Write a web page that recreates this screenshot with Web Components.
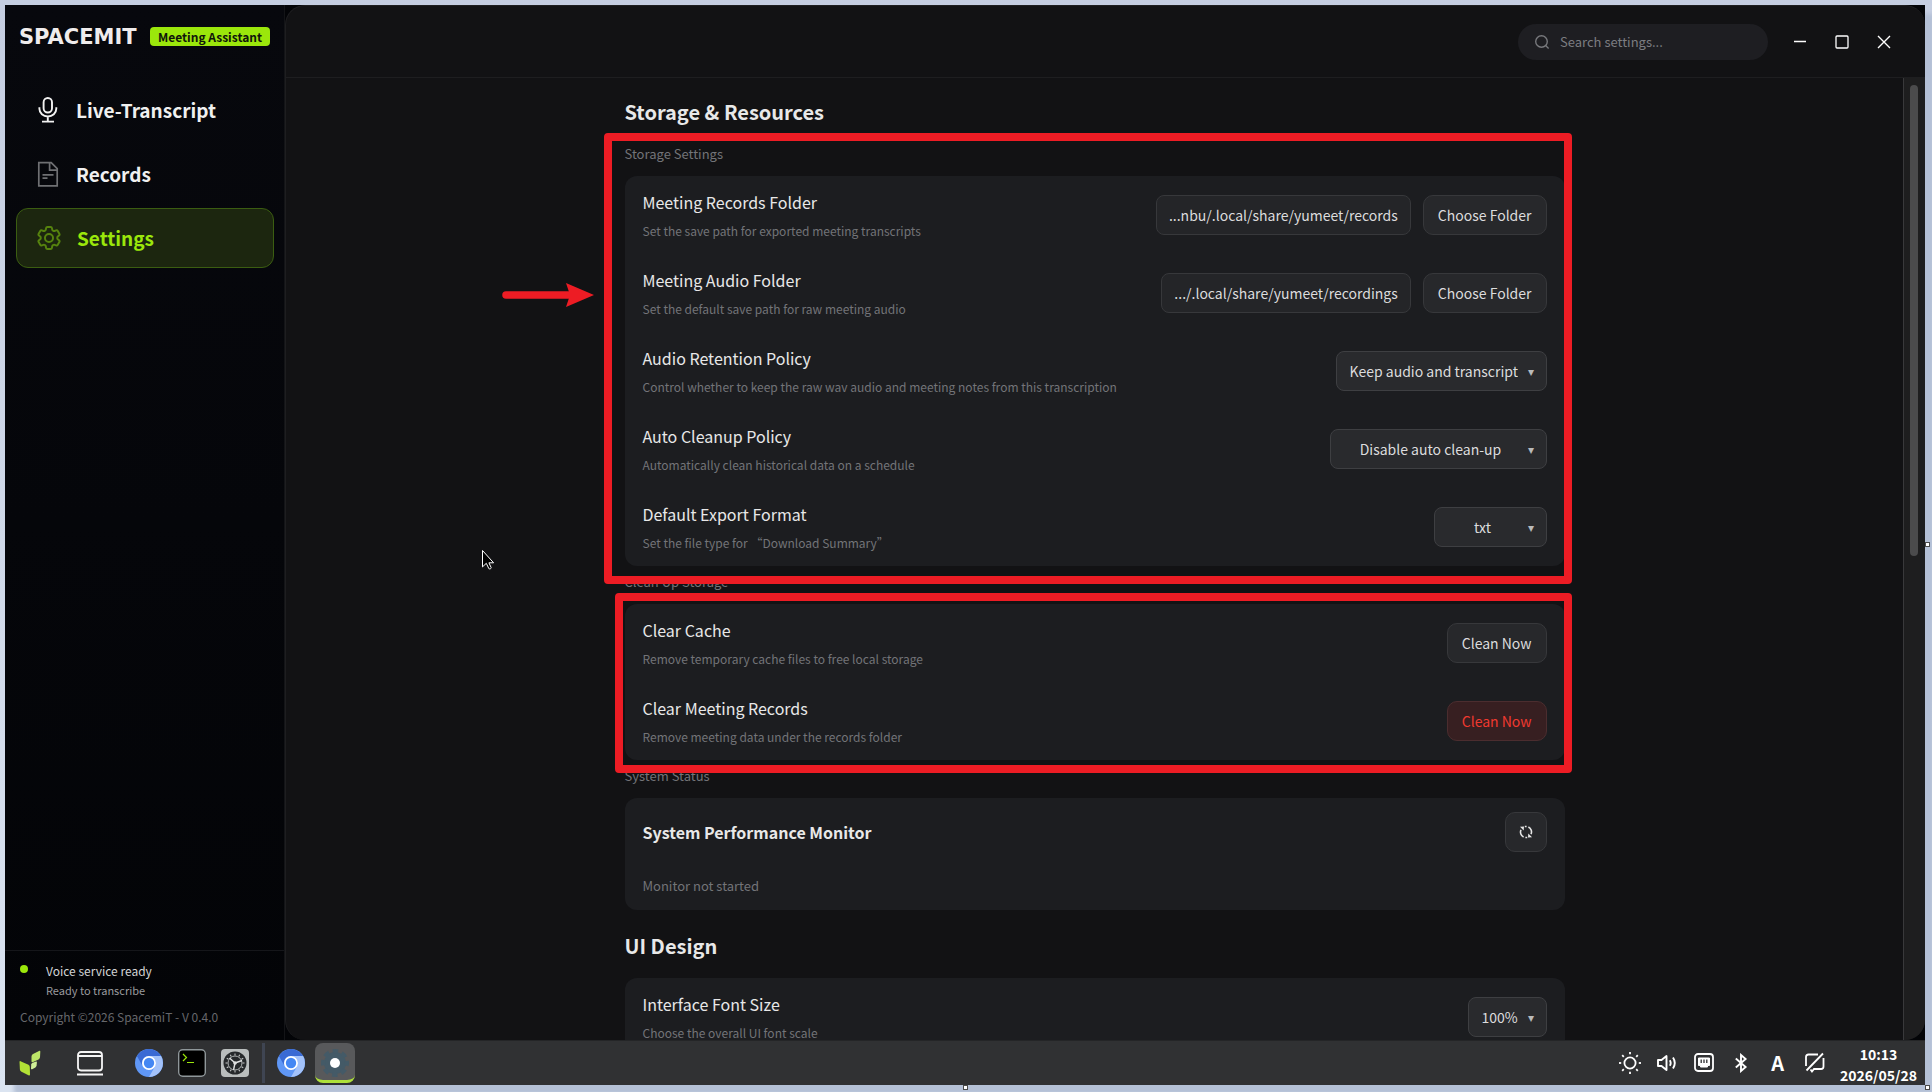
<!DOCTYPE html>
<html lang="en">
<head>
<meta charset="utf-8">
<meta name="viewport" content="width=device-width, initial-scale=1">
<title>Meeting Assistant</title>
<style>
  :root {
    --accent: #9be70b;
    --mark: #ed1c24;
    --text: #e8e8e8;
    --muted: #737478;
    --card: #1c1d20;
    --line: #1e1e20;
    --control: #27282b;
    --control-line: #37383b;
  }
  body {
    margin: 0;
    height: 100vh;
    box-sizing: border-box;
    padding: 5px 7px 7px 5px;
    overflow: hidden;
    display: flex;
    position: relative;
    background: linear-gradient(#c5cee1, #dbe4f1);
    color: var(--text);
    font-family: "Noto Sans CJK SC", "Noto Sans", sans-serif;
    font-size: 13px;
  }
</style>
</head>
<body>
<desktop-frame>
  <app-sidebar slot="sidebar">
    <nav-item icon="mic" label="Live-Transcript"></nav-item>
    <nav-item icon="doc" label="Records"></nav-item>
    <nav-item icon="gear" label="Settings" active></nav-item>
  </app-sidebar>
  <settings-page slot="main">
    <settings-section heading="Storage &amp; Resources">
      <settings-group heading="Storage Settings" mark="group">
        <setting-row kind="path" label="Meeting Records Folder" desc="Set the save path for exported meeting transcripts" value="...nbu/.local/share/yumeet/records" action="Choose Folder"></setting-row>
        <setting-row kind="path" label="Meeting Audio Folder" desc="Set the default save path for raw meeting audio" value=".../.local/share/yumeet/recordings" action="Choose Folder"></setting-row>
        <setting-row kind="select" label="Audio Retention Policy" desc="Control whether to keep the raw wav audio and meeting notes from this transcription" value="Keep audio and transcript" width="211"></setting-row>
        <setting-row kind="select" label="Auto Cleanup Policy" desc="Automatically clean historical data on a schedule" value="Disable auto clean-up" width="217"></setting-row>
        <setting-row kind="select" label="Default Export Format" desc="Set the file type for “Download Summary”" value="txt" width="113"></setting-row>
      </settings-group>
      <settings-group heading="Clean Up Storage" mark="card">
        <setting-row kind="action" label="Clear Cache" desc="Remove temporary cache files to free local storage" action="Clean Now"></setting-row>
        <setting-row kind="action" label="Clear Meeting Records" desc="Remove meeting data under the records folder" action="Clean Now" danger></setting-row>
      </settings-group>
      <settings-group heading="System Status">
        <performance-monitor label="System Performance Monitor" status="Monitor not started"></performance-monitor>
      </settings-group>
    </settings-section>
    <settings-section heading="UI Design">
      <settings-group>
        <setting-row kind="select" label="Interface Font Size" desc="Choose the overall UI font scale" value="100%" width="79"></setting-row>
      </settings-group>
    </settings-section>
  </settings-page>
  <task-bar slot="taskbar"></task-bar>
</desktop-frame>
<resize-handles></resize-handles>

<script>
const chromiumIcon = `
  <svg width="28" height="28" viewBox="0 0 28 28" aria-hidden="true">
    <circle cx="14" cy="14" r="14" fill="#5f97f6"/>
    <path d="M1.9 7A14 14 0 0 1 26.1 7H14A7 7 0 0 0 7.9 17.5Z" fill="#3a6ad4"/>
    <path d="M26.1 7A14 14 0 0 1 14 28L20 17.5A7 7 0 0 0 14 7Z" fill="#a3c2fa"/>
    <circle cx="14" cy="14" r="7" fill="#fff"/>
    <circle cx="14" cy="14" r="5.2" fill="#4487f3"/>
  </svg>`

const navIcons = {
  mic: `<svg width="24" height="28" viewBox="0 0 24 28" fill="none" stroke="#f2f2f2" stroke-width="1.9">
    <rect x="7.6" y="2" width="8.4" height="14.5" rx="4.2"/>
    <path d="M3.4 11.2v1.6a8.4 7.6 0 0 0 16.9 0v-1.6M11.8 20.4v5M6 25.6h12"/></svg>`,
  doc: `<svg width="24" height="28" viewBox="0 0 24 28" fill="none" stroke="#6f7073" stroke-width="1.7">
    <path d="M2.8 2.6h12.4l6 6v17.2H2.8zM13.6 2.6v7.6h7.6M6.5 14.8h11M6.5 18.2h5"/></svg>`,
  gear: `<svg width="24" height="28" viewBox="2.2 .7 19.6 22.7" fill="none" stroke="#56830e" stroke-width="1.6">
    <path d="M9.594 3.94c.09-.542.56-.94 1.11-.94h2.593c.55 0 1.02.398 1.11.94l.213 1.281c.063.374.313.686.645.87.074.04.147.083.22.127.325.196.72.257 1.075.124l1.217-.456a1.125 1.125 0 0 1 1.37.49l1.296 2.247a1.125 1.125 0 0 1-.26 1.431l-1.003.827c-.293.241-.438.613-.43.992a7.723 7.723 0 0 1 0 .255c-.008.378.137.75.43.991l1.004.827c.424.35.534.955.26 1.43l-1.298 2.247a1.125 1.125 0 0 1-1.369.491l-1.217-.456c-.355-.133-.75-.072-1.076.124a6.47 6.47 0 0 1-.22.128c-.331.183-.581.495-.644.869l-.213 1.281c-.09.543-.56.94-1.11.94h-2.594c-.55 0-1.019-.398-1.11-.94l-.213-1.281c-.062-.374-.312-.686-.644-.87a6.52 6.52 0 0 1-.22-.127c-.325-.196-.72-.257-1.076-.124l-1.217.456a1.125 1.125 0 0 1-1.369-.49l-1.297-2.247a1.125 1.125 0 0 1 .26-1.431l1.004-.827c.292-.24.437-.613.43-.991a6.932 6.932 0 0 1 0-.255c.007-.38-.138-.751-.43-.992l-1.004-.827a1.125 1.125 0 0 1-.26-1.43l1.297-2.247a1.125 1.125 0 0 1 1.37-.491l1.216.456c.356.133.751.072 1.076-.124.072-.044.146-.086.22-.128.332-.183.582-.495.644-.869l.214-1.28Z"/>
    <circle cx="12" cy="12" r="3.3"/></svg>`
}

// Shared look of the buttons inside cards
const buttonStyles = `
  button {
    box-sizing: border-box;
    height: 40px;
    padding: 0 14px;
    border: 1px solid var(--control-line);
    border-radius: 10px;
    background: var(--control);
    color: #dcdcdd;
    font: inherit;
    font-size: 14px;
    line-height: 22px;
    white-space: nowrap;
  }`

class BaseElement extends HTMLElement {
  connectedCallback () {
    if (this.shadowRoot) return
    this.attachShadow({ mode: 'open' })
    const template = document.createElement('template')
    template.innerHTML = this.getTemplateContent()
    this.shadowRoot.appendChild(template.content.cloneNode(true))
  }
}

class DesktopFrame extends BaseElement {
  getTemplateContent () {
    return `
    <style>
    :host {
      flex: 1;
      min-width: 0;
      display: grid;
      grid-template: minmax(0, 1fr) 45px / 280px minmax(0, 1fr);
      background: #030407;
      box-shadow: 9px 9px 4px #b4c0d6;
    }
    ::slotted([slot="taskbar"]) { grid-column: 1 / -1; }
    </style>
    <slot name="sidebar"></slot>
    <slot name="main"></slot>
    <slot name="taskbar"></slot>`
  }
}

class AppSidebar extends BaseElement {
  getTemplateContent () {
    return `
    <style>
    :host {
      display: flex;
      flex-direction: column;
      box-sizing: border-box;
      border-right: 1px solid #131417;
      background: linear-gradient(#07080d, #030407);
    }
    header {
      display: flex;
      align-items: center;
      justify-content: space-between;
      height: 19px;
      padding: 22px 14px 34px 14px;
    }
    .logo {
      font: bold 21px/20px "DejaVu Sans", sans-serif;
      color: #efecec;
    }
    .badge {
      padding: 0 8px;
      border-radius: 4px;
      background: var(--accent);
      color: #10150a;
      font-size: 12px;
      font-weight: 700;
      line-height: 19px;
      white-space: nowrap;
    }
    nav {
      flex: 1;
      display: flex;
      flex-direction: column;
      gap: 4px;
      padding: 0 10px 0 11px;
    }
    footer {
      padding: 10px 15px 13px;
      border-top: 1px solid #15161a;
      color: #66676b;
      font-size: 12px;
      line-height: 20px;
    }
    .status {
      display: grid;
      grid-template-columns: 8px 1fr;
      column-gap: 18px;
      margin-bottom: 8px;
      font-size: 11px;
      line-height: 18px;
      color: #9a9b9e;
    }
    .status strong {
      color: #d4d5d6;
      font-size: 12px;
      font-weight: 400;
      line-height: 20px;
    }
    .dot {
      width: 8px;
      height: 8px;
      margin-top: 4px;
      border-radius: 50%;
      background: var(--accent);
    }
    .status span { grid-column: 2; }
    </style>
    <header><span class="logo">SPACEMIT</span><span class="badge">Meeting Assistant</span></header>
    <nav aria-label="Main"><slot></slot></nav>
    <footer>
      <div class="status"><i class="dot"></i><strong>Voice service ready</strong><span>Ready to transcribe</span></div>
      <div>Copyright ©2026 SpacemiT - V 0.4.0</div>
    </footer>`
  }
}

class NavItem extends BaseElement {
  getTemplateContent () {
    const icon = this.getAttribute('icon')
    const label = this.getAttribute('label')
    return `
    <style>
    :host { display: block; }
    a {
      display: flex;
      align-items: center;
      gap: 16px;
      box-sizing: border-box;
      height: 60px;
      padding-left: 20px;
      border-radius: 12px;
      color: #f0f0f0;
      font-size: 19px;
      font-weight: 700;
      line-height: 28px;
      text-decoration: none;
    }
    :host([active]) a {
      border: 1px solid #3b5d11;
      background: #1c260f;
      color: var(--accent);
    }
    </style>
    <a href="#${icon}">${navIcons[icon]}<span>${label}</span></a>`
  }
}

class SettingsPage extends BaseElement {
  getTemplateContent () {
    return `
    <style>
    :host {
      display: flex;
      flex-direction: column;
      position: relative;
      box-sizing: border-box;
      border: 1px solid var(--line);
      border-right-width: 0;
      border-bottom-width: 0;
      border-radius: 20px;
      overflow: hidden;
      background: #121214;
    }
    header {
      flex: none;
      display: flex;
      justify-content: flex-end;
      align-items: center;
      box-sizing: border-box;
      height: 72px;
      padding-right: 20px;
      border-bottom: 1px solid var(--line);
    }
    .search {
      display: flex;
      align-items: center;
      gap: 10px;
      box-sizing: border-box;
      width: 250px;
      height: 36px;
      margin-right: 11px;
      padding: 0 16px;
      border-radius: 18px;
      background: #1e1e22;
    }
    .search input {
      flex: 1;
      min-width: 0;
      padding: 0;
      border: 0;
      outline: 0;
      background: none;
      color: var(--text);
      font: inherit;
    }
    .search input::placeholder { color: #7c7d81; }
    header button {
      display: grid;
      place-items: center;
      width: 42px;
      height: 36px;
      padding: 0;
      border: 0;
      background: none;
    }
    .body {
      flex: 1;
      min-height: 0;
      display: flex;
    }
    main {
      flex: 1;
      overflow: hidden;
      padding: 20px 0 0;
    }
    .column {
      max-width: 940px;
      margin: 0 auto;
    }
    .track {
      width: 21px;
      border-left: 1px solid #39393b;
      background: #1e1e1f;
    }
    .thumb {
      width: 8px;
      height: 49%;
      margin: 7px 0 0 6px;
      border-radius: 4px;
      background: #4b4b4c;
    }
    .arrow, .pointer {
      position: absolute;
    }
    .arrow { left: 216px; top: 277px; }
    .pointer { left: 195px; top: 543px; }
    </style>
    <header>
      <label class="search">
        <svg width="16" height="16" viewBox="0 0 16 16" fill="none" stroke="#77787c" stroke-width="1.4" aria-hidden="true"><circle cx="7.5" cy="7.5" r="5.8"/><path d="M11.6 11.6l3 3"/></svg>
        <input type="search" placeholder="Search settings..." aria-label="Search settings">
      </label>
      <button type="button" aria-label="Minimize"><svg width="14" height="14" viewBox="0 0 14 14"><path d="M1 6.5h12" stroke="#fff" stroke-width="1.3"/></svg></button>
      <button type="button" aria-label="Maximize"><svg width="14" height="14" viewBox="0 0 14 14"><rect x="1" y="1" width="12" height="12" rx="1" fill="none" stroke="#fff" stroke-width="1.3"/></svg></button>
      <button type="button" aria-label="Close"><svg width="14" height="14" viewBox="0 0 14 14"><path d="M1 1l12 12M13 1L1 13" stroke="#fff" stroke-width="1.4"/></svg></button>
    </header>
    <div class="body">
      <main><div class="column"><slot></slot></div></main>
      <div class="track"><div class="thumb"></div></div>
    </div>
    <svg class="arrow" width="92" height="24" viewBox="0 0 92 24" aria-hidden="true">
      <path d="M4 12h66" stroke="#ed1c24" stroke-width="7.5" stroke-linecap="round"/>
      <path d="M64 0l28 12-28 12 4-12z" fill="#ed1c24"/>
    </svg>
    <svg class="pointer" width="14" height="22" viewBox="0 0 14 22" aria-hidden="true">
      <path d="M1.5 1.5v16.4l3.8-3.6 2.6 5.4c1 .5 2.2 0 2.3-1l-2.3-4.9h4.7z" fill="#000" stroke="#fff"/>
    </svg>`
  }
}

class SettingsSection extends BaseElement {
  getTemplateContent () {
    return `
    <style>
    :host { display: block; }
    :host(:not(:first-child)) { margin-top: 22px; }
    h2 {
      margin: 0 0 18px;
      font-size: 20px;
      font-weight: 700;
      line-height: 28px;
    }
    </style>
    <h2>${this.getAttribute('heading').replace('&', '&amp;')}</h2>
    <slot></slot>`
  }
}

class SettingsGroup extends BaseElement {
  getTemplateContent () {
    const heading = this.getAttribute('heading')
    const mark = this.getAttribute('mark')
    return `
    <style>
    :host { display: block; }
    :host(:not(:first-child)) { margin-top: 6px; }
    h3 {
      margin: 0 0 12px;
      color: var(--muted);
      font-size: 13px;
      font-weight: 400;
      line-height: 20px;
    }
    .card {
      position: relative;
      border-radius: 12px;
      background: var(--card);
    }
    .mark {
      position: absolute;
      z-index: 1;
      border: 8px solid var(--mark);
      border-radius: 4px;
      pointer-events: none;
    }
    .mark.group { inset: -43px -7px -18px -21px; }
    .mark.card-only { inset: -11px -7px -13px -10px; }
    </style>
    ${heading ? `<h3>${heading}</h3>` : ''}
    <div class="card">
      <slot></slot>
      ${mark ? `<div class="mark ${mark === 'group' ? 'group' : 'card-only'}"></div>` : ''}
    </div>`
  }
}

class SettingRow extends BaseElement {
  getControls () {
    const value = this.getAttribute('value')
    const action = this.getAttribute('action')
    switch (this.getAttribute('kind')) {
      case 'path':
        return `<input id="field" type="text" value="${value}" readonly><button type="button">${action}</button>`
      case 'select':
        return `<span class="drop" style="width: ${this.getAttribute('width')}px"><select id="field"><option>${value}</option></select><i aria-hidden="true">▾</i></span>`
      default:
        return `<button id="field" type="button">${action}</button>`
    }
  }

  getTemplateContent () {
    return `
    <style>
    :host {
      display: flex;
      align-items: center;
      justify-content: space-between;
      gap: 24px;
      box-sizing: border-box;
      height: 78px;
      padding: 0 18px;
    }
    label {
      display: block;
      font-size: 16px;
      line-height: 26px;
    }
    p {
      margin: 6px 0 0;
      color: var(--muted);
      font-size: 12px;
      line-height: 20px;
    }
    .controls {
      display: flex;
      gap: 12px;
    }
    ${buttonStyles}
    :host([danger]) button {
      border-color: #4b2d2f;
      background: #371f21;
      color: #f0392f;
    }
    input, select {
      box-sizing: border-box;
      height: 40px;
      margin: 0;
      border: 1px solid var(--control-line);
      border-radius: 8px;
      color: #dcdcdd;
      font: inherit;
      font-size: 14px;
    }
    input {
      field-sizing: content;
      padding: 0 12px;
      background: #242528;
      text-align: right;
    }
    .drop { position: relative; }
    select {
      appearance: none;
      width: 100%;
      padding: 0 28px 0 13px;
      border-color: #3e3f42;
      background: #292a2d;
      text-align: center;
      text-align-last: center;
    }
    .drop i {
      position: absolute;
      right: 13px;
      top: 9px;
      color: #b9babb;
      font-size: 12px;
      font-style: normal;
      line-height: 22px;
      pointer-events: none;
    }
    </style>
    <div>
      <label for="field">${this.getAttribute('label')}</label>
      <p>${this.getAttribute('desc')}</p>
    </div>
    <div class="controls">${this.getControls()}</div>`
  }
}

class PerformanceMonitor extends BaseElement {
  getTemplateContent () {
    return `
    <style>
    :host {
      display: block;
      padding: 14px 18px;
    }
    .head {
      display: flex;
      align-items: center;
      justify-content: space-between;
    }
    h4 {
      margin: 0;
      font-size: 16px;
      font-weight: 700;
      line-height: 24px;
    }
    p {
      margin: 24px 0 0;
      color: var(--muted);
      line-height: 20px;
    }
    ${buttonStyles}
    button {
      display: grid;
      place-items: center;
      width: 42px;
      padding: 0;
    }
    </style>
    <div class="head">
      <h4>${this.getAttribute('label')}</h4>
      <button type="button" aria-label="Refresh">
        <svg width="14" height="14" viewBox="0 0 14 14" fill="none" stroke="#e6e6e6" stroke-width="1.6" aria-hidden="true">
          <path d="M4.6 12A5.5 5.5 0 0 1 2 4.8M5.800 1.500h1.800M9.400 2A5.500 5.500 0 0 1 12 9.200M8.200 12.500H6.400"/>
          <path d="M1 1.800L5 1.600 4.700 5.600zM13 12.200L9 12.400 9.300 8.400z" fill="#e6e6e6" stroke="none"/>
        </svg>
      </button>
    </div>
    <p>${this.getAttribute('status')}</p>`
  }
}

class TaskBar extends BaseElement {
  getTemplateContent () {
    // Twelve tick marks round the dial of the settings icon
    const ticks = Array.from({ length: 12 }, (_, i) => `<path d="M14 4.5v2" transform="rotate(${i * 30} 14 14)"/>`).join('')
    const rays = Array.from({ length: 8 }, (_, i) => `<path d="M12 1v2.2" transform="rotate(${i * 45} 12 12)"/>`).join('')
    return `
    <style>
    :host {
      display: flex;
      align-items: center;
      box-sizing: border-box;
      border-top: 1px solid #242527;
      background: #303133;
      color: #fff;
    }
    .group, .tray { display: flex; }
    .start { gap: 20px; padding: 0 19px 0 5px; }
    .pinned { gap: 3px; }
    .running {
      gap: 4px;
      margin-left: 7px;
      padding-left: 6px;
      border-left: 3px solid #3f4552;
    }
    button {
      display: grid;
      place-items: center;
      width: 40px;
      height: 40px;
      padding: 0;
      border: 0;
      border-radius: 8px;
      background: none;
      color: inherit;
    }
    .current {
      border-bottom: 3px solid #aee03a;
      padding-top: 3px;
      background: #58595b;
    }
    .tray { margin-left: auto; }
    .tray button { width: 37px; }
    .letter {
      font: bold 20px/20px "Noto Sans CJK SC", sans-serif;
    }
    time {
      margin: 4px 8px 0 7px;
      font-size: 14px;
      font-weight: 700;
      line-height: 21px;
      text-align: center;
    }
    time span { display: block; }
    </style>
    <div class="group start">
      <button type="button" aria-label="Start">
        <svg width="22" height="26" viewBox="0 0 22 26">
          <path d="M.5 11.5Q1 10.8 2 11.4L9.5 14.8Q10.8 15.6 10.8 17L11 24.5Q10.9 26 9.5 25.2L2.5 21.8Q1 21 .9 19.5Z" fill="#b2e136"/>
          <path d="M12.5 6.5Q12.6 4.8 14 4L20.5.8Q21.5.6 21.3 2L21 7.2Q20.8 8.8 19.5 9.5L13.5 12.3Q12.5 12.5 12.5 11.3Z" fill="#bde668"/>
          <path d="M12.2 14.5Q12.3 13.6 13.2 13L17 11.6Q18 11.4 17.9 12.5L17.6 15.5Q17.4 16.8 16.4 17.4L13.2 19.2Q12 19.5 12 18.4Z" fill="#cfee97"/>
        </svg>
      </button>
      <button type="button" aria-label="Show desktop">
        <svg width="26" height="26" viewBox="0 0 26 26" fill="none" stroke="#f5f5f5" stroke-width="1.8">
          <rect x="1" y="2" width="24" height="18.5" rx="3"/><path d="M1 6h24M0 24.5h26"/>
        </svg>
      </button>
    </div>
    <div class="group pinned">
      <button type="button" aria-label="Chromium">${chromiumIcon}</button>
      <button type="button" aria-label="Terminal">
        <svg width="28" height="28" viewBox="0 0 28 28" fill="none">
          <rect x=".7" y=".7" width="26.6" height="26.6" rx="4" fill="#000" stroke="#8f979a" stroke-width="1.4"/>
          <path d="M5 5l3.5 3.5L5 12M9 13.5h7" stroke="#9be70b" stroke-width="1.2"/>
        </svg>
      </button>
      <button type="button" aria-label="Control center">
        <svg width="28" height="28" viewBox="0 0 28 28" fill="none">
          <rect width="28" height="28" rx="4" fill="#b9bdbd"/>
          <circle cx="14" cy="14" r="11.5" fill="#26292b"/>
          <g stroke="#c8cbcb">${ticks}</g>
          <circle cx="14" cy="14" r="7" stroke="#aeb2b2"/>
          <path d="M14 14l7-2.5M14 14l-5.5-5M14 14l-1.500 7" stroke="#dfe1e1" stroke-width="1.4"/>
          <circle cx="14" cy="14" r="1.8" fill="#dfe1e1"/>
        </svg>
      </button>
    </div>
    <div class="group running">
      <button type="button" aria-label="Chromium window">${chromiumIcon}</button>
      <button class="current" type="button" aria-label="Meeting Assistant window">
        <svg width="28" height="28" viewBox="0 0 28 28">
          <circle cx="14" cy="14" r="11" fill="#445a67"/>
          <circle cx="14" cy="14" r="12" fill="none" stroke="#445a67" stroke-width="4" stroke-dasharray="5.5 3.925" stroke-dashoffset="2.7"/>
          <circle cx="14" cy="14" r="5" fill="#fff"/>
        </svg>
      </button>
    </div>
    <div class="tray">
      <button type="button" aria-label="Brightness">
        <svg width="24" height="24" viewBox="0 0 24 24" fill="none" stroke="#fff" stroke-width="1.8"><circle cx="12" cy="12" r="5.6"/>${rays}</svg>
      </button>
      <button type="button" aria-label="Volume">
        <svg width="20" height="18" viewBox="0 0 20 18" fill="none" stroke="#fff" stroke-width="1.9" stroke-linejoin="round"><path d="M1 6h3.5L9.5 2v14l-5-4H1zM12.800 6.200q1.800 2.800 0 5.600M16 3.500q3.600 5.500 0 11"/></svg>
      </button>
      <button type="button" aria-label="Network">
        <svg width="20" height="20" viewBox="0 0 20 20" fill="none" stroke="#fff" stroke-width="1.8"><rect x="1" y="1" width="18" height="17" rx="3"/><path d="M4.5 5h11v7.5h-2V14h-7v-1.5h-2z" fill="#fff" stroke-width="1"/><path d="M7.2 6.5v3.5M10 6.5v3.500M12.800 6.500v3.500" stroke="#303133" stroke-width="1.3"/></svg>
      </button>
      <button type="button" aria-label="Bluetooth">
        <svg width="14" height="20" viewBox="0 0 14 20" fill="none" stroke="#fff" stroke-width="1.9"><path d="M1.8 5.5l9.8 8.5L7 18V2l4.600 4-9.800 8.500"/></svg>
      </button>
      <button class="letter" type="button" aria-label="Input method">A</button>
      <button type="button" aria-label="Notifications off">
        <svg width="22" height="22" viewBox="0 0 22 22" fill="none" stroke="#fff" stroke-width="1.8"><path d="M2 14V5q0-2.500 2.500-2.500H14M19.500 6v8.500q0 2.500-2.500 2.500h-7l-2 2.500L6.500 17.500M19 1.500L2.500 18.500"/></svg>
      </button>
    </div>
    <time datetime="2026-05-28T10:13"><span>10:13</span><span>2026/05/28</span></time>`
  }
}

class ResizeHandles extends BaseElement {
  getTemplateContent () {
    return `
    <style>
    :host { display: contents; }
    i {
      position: absolute;
      box-sizing: border-box;
      width: 5px;
      height: 5px;
      border: 1px solid #4a4a4a;
      background: #fff;
    }
    .bottom { left: 50%; bottom: 2px; margin-left: -3px; }
    .right { right: 2px; top: 50%; margin-top: -4px; }
    .corner { right: 2px; bottom: 2px; }
    </style>
    <i class="bottom"></i><i class="right"></i><i class="corner"></i>`
  }
}

window.customElements.define('desktop-frame', DesktopFrame)
window.customElements.define('app-sidebar', AppSidebar)
window.customElements.define('nav-item', NavItem)
window.customElements.define('settings-page', SettingsPage)
window.customElements.define('settings-section', SettingsSection)
window.customElements.define('settings-group', SettingsGroup)
window.customElements.define('setting-row', SettingRow)
window.customElements.define('performance-monitor', PerformanceMonitor)
window.customElements.define('task-bar', TaskBar)
window.customElements.define('resize-handles', ResizeHandles)
</script>
</body>
</html>
